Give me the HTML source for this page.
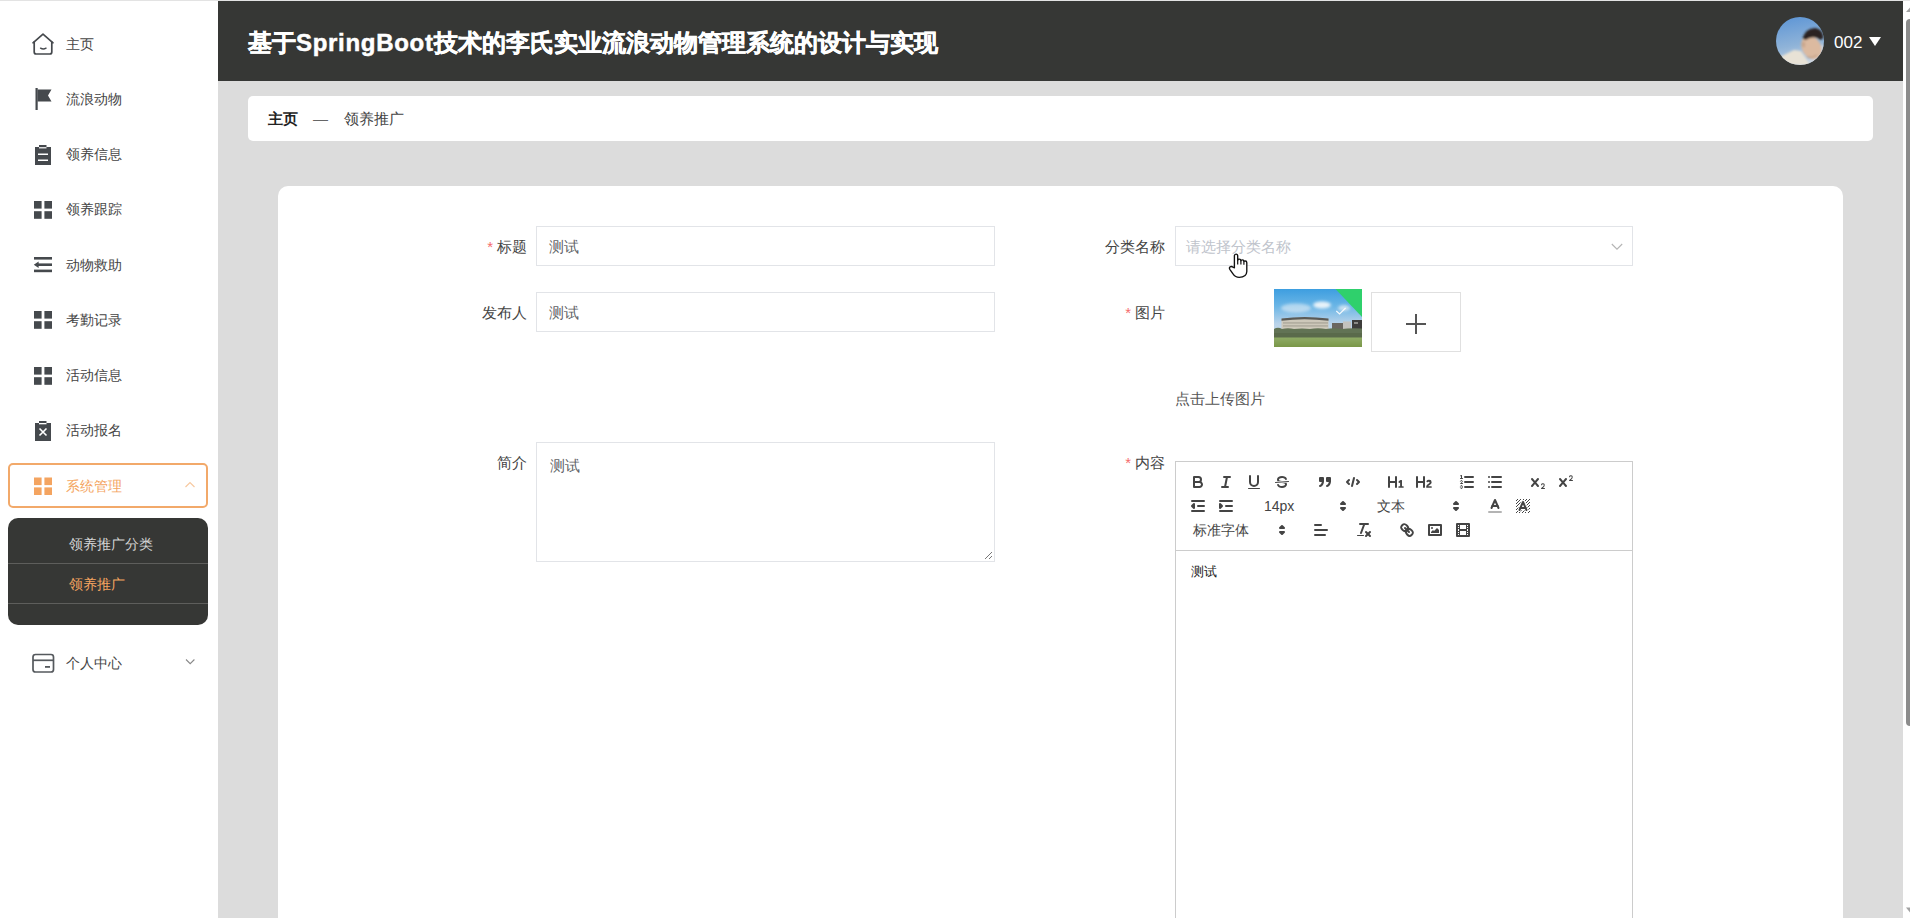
<!DOCTYPE html>
<html><head><meta charset="utf-8">
<style>
*{box-sizing:border-box;margin:0;padding:0}
html,body{width:1910px;height:918px;overflow:hidden;font-family:"Liberation Sans",sans-serif;background:#fff}
#topline{position:absolute;left:0;top:0;width:1910px;height:1px;background:#e3e3e3}
#side{position:absolute;left:0;top:1px;width:218px;height:917px;background:#fff}
#header{position:absolute;left:218px;top:1px;width:1685px;height:80px;background:#363735}
#main{position:absolute;left:218px;top:81px;width:1685px;height:837px;background:#dcdcdc}
#sb{position:absolute;left:1903px;top:1px;width:7px;height:917px;background:#fff}
#sbthumb{position:absolute;left:1906px;top:19px;width:4px;height:707px;background:#8c8c8c;border-radius:4px 0 0 4px}
.title{position:absolute;left:248px;top:27px;-webkit-text-stroke:0.5px #fff;font-size:24px;font-weight:bold;color:#fff;white-space:nowrap;letter-spacing:0px}
.avatar{position:absolute;left:1776px;top:16.5px;width:48px;height:48px;border-radius:50%;overflow:hidden}
.uname{position:absolute;left:1834px;top:33px;font-size:17px;line-height:20px;color:#fff}
.tri{position:absolute;left:1869px;top:37px;width:0;height:0;border-left:6px solid transparent;border-right:6px solid transparent;border-top:9px solid #fff}
.bc{position:absolute;left:248px;top:96px;width:1625px;height:45px;background:#fff;border-radius:5px}
.bc span{position:absolute;top:14px;font-size:15px;line-height:17px;color:#333}
.card{position:absolute;left:278px;top:186px;width:1565px;height:800px;background:#fff;border-radius:10px}
.mt{position:absolute;left:66px;font-size:14px;line-height:16px;color:#454545;white-space:nowrap}
.menu .it{position:absolute;left:0;width:218px;height:40px}
.menu .it .tx{position:absolute;left:66px;top:12px;font-size:14px;color:#4a4a4a}
.menu .it svg{position:absolute;left:32px;top:10px}
.lbl{position:absolute;font-size:15px;line-height:17px;color:#444;text-align:right;white-space:nowrap}
.lr{right:1383px}.rr{right:745px}
.req{color:#f56c6c;margin-right:4px}
.inp{position:absolute;border:1px solid #e2e4e8;background:#fff}
.inp .v{position:absolute;left:12px;font-size:15px;line-height:17px;color:#606266;white-space:nowrap}
.ed{position:absolute;border:1px solid #ccc;background:#fff}
.s{fill:none;stroke:#444;stroke-width:2;stroke-linecap:round;stroke-linejoin:round}
.t{stroke-width:1}
.f{fill:#444}
.f.s{fill:#444}
.pk{position:absolute;font-size:14px;line-height:22px;color:#444;white-space:nowrap}
</style></head><body>
<div id="topline"></div>
<div id="side">
<svg style="position:absolute;left:0;top:-1px" width="218" height="700" viewBox="0 0 218 700">
<g fill="none" stroke="#45494d" stroke-width="1.7" stroke-linejoin="round" stroke-linecap="round">
<path d="M33 42.8 L43 34.2 L53 42.8"/>
<path d="M34.2 42 V52 Q34.2 54 36.2 54 H49.8 Q51.8 54 51.8 52 V42"/>
<path d="M40.6 48.2 Q43.3 49.8 46 48.2" stroke-width="1.5"/>
</g>
<g fill="#45494d">
<rect x="35.5" y="88" width="2.2" height="22"/>
<path d="M37.5 89.5 H51.5 L48 95.5 L51.5 101.5 H37.5 Z"/>
<path d="M35 147 H39 V145 H46.5 V147 H51 V165 H35 Z M38 153.5 V155 H48 V153.5 Z M38 159.5 V161 H48 V159.5 Z" fill-rule="evenodd"/>
<rect x="34" y="201" width="7.6" height="7.6"/><rect x="44.4" y="201" width="7.6" height="7.6"/><rect x="34" y="211.2" width="7.6" height="7.6"/><rect x="44.4" y="211.2" width="7.6" height="7.6"/>
<rect x="34" y="257" width="18" height="2.6"/><rect x="38" y="263.4" width="14" height="2.6"/><rect x="34" y="269.6" width="18" height="2.6"/>
<path d="M33.8 264.7 L38.6 261.4 V268 Z"/>
<rect x="34" y="311" width="7.6" height="7.6"/><rect x="44.4" y="311" width="7.6" height="7.6"/><rect x="34" y="321.2" width="7.6" height="7.6"/><rect x="44.4" y="321.2" width="7.6" height="7.6"/>
<rect x="34" y="367" width="7.6" height="7.6"/><rect x="44.4" y="367" width="7.6" height="7.6"/><rect x="34" y="377.2" width="7.6" height="7.6"/><rect x="44.4" y="377.2" width="7.6" height="7.6"/>
<path d="M35 423 H39 V421 H46.5 V423 H51 V441 H35 Z" />
</g>
<path d="M39.5 428.5 L46.5 435.5 M46.5 428.5 L39.5 435.5" stroke="#fff" stroke-width="1.6"/>
<rect x="39" y="147.2" width="7.5" height="1.2" fill="#fff"/>
<rect x="39" y="423" width="7.5" height="1.3" fill="#fff"/>
<rect x="9" y="464" width="198" height="43" rx="4" fill="#fff" stroke="#f2a96a" stroke-width="2"/>
<g fill="#f4a460">
<rect x="34" y="477.5" width="7.6" height="7.6"/><rect x="44.4" y="477.5" width="7.6" height="7.6"/><rect x="34" y="487.4" width="7.6" height="7.6"/><rect x="44.4" y="487.4" width="7.6" height="7.6"/>
</g>
<path d="M185.5 487 L190 482.5 L194.5 487" fill="none" stroke="#f7c9a0" stroke-width="1.2"/>
<rect x="8" y="518" width="200" height="107" rx="10" fill="#363735"/>
<rect x="8" y="563" width="200" height="1" fill="#5e5e5c"/>
<rect x="8" y="603" width="200" height="1" fill="#5e5e5c"/>
<g fill="none" stroke="#55595d" stroke-width="1.7">
<rect x="33" y="654.5" width="20.5" height="17.5" rx="2.5"/>
<path d="M33 660.3 H53.5"/>
</g>
<rect x="45" y="666" width="5" height="1.8" fill="#55595d"/>
<path d="M186 659.5 L190.2 663.7 L194.4 659.5" fill="none" stroke="#888" stroke-width="1.1"/>
</svg>
<div class="mt" style="top:35px">主页</div>
<div class="mt" style="top:90px">流浪动物</div>
<div class="mt" style="top:145px">领养信息</div>
<div class="mt" style="top:200px">领养跟踪</div>
<div class="mt" style="top:256px">动物救助</div>
<div class="mt" style="top:311px">考勤记录</div>
<div class="mt" style="top:366px">活动信息</div>
<div class="mt" style="top:421px">活动报名</div>
<div class="mt" style="top:477px;color:#f4a460">系统管理</div>
<div class="mt" style="top:535px;left:69px;color:#d4d4d4">领养推广分类</div>
<div class="mt" style="top:575px;left:69px;color:#f4a460">领养推广</div>
<div class="mt" style="top:654px">个人中心</div>
</div>
<div id="header">
</div>
<div id="main"></div>
<div class="title">基于<span style="letter-spacing:0.7px">SpringBoot</span>技术的李氏实业流浪动物管理系统的设计与实现</div>
<div class="avatar"><svg width="48" height="48" viewBox="0 0 48 48">
<defs><linearGradient id="av" x1="0.2" y1="0" x2="0.4" y2="1"><stop offset="0" stop-color="#5e96d6"/><stop offset="0.6" stop-color="#8fb3d8"/><stop offset="1" stop-color="#c4d2e2"/></linearGradient>
<filter id="ab"><feGaussianBlur stdDeviation="0.8"/></filter></defs>
<rect width="48" height="48" fill="url(#av)"/>
<g filter="url(#ab)">
<path d="M33 46 L46.5 27 L48 30 L48 48 L36 48 Z" fill="#cdd6e0"/>
<path d="M4 40 L18 33 L25 34 L31 43 L34 48 L4 48 Z" fill="#e8e2d6"/>
<ellipse cx="35.5" cy="30.5" rx="9.5" ry="12.5" transform="rotate(-30 35.5 30.5)" fill="#dcbaa0"/>
<path d="M26.5 21.5 Q29 11.5 39.5 11 Q47.5 12.5 47.5 21 L44.5 23 Q38 17.5 29.5 23 Z" fill="#2b2420"/>
<ellipse cx="27.5" cy="27.5" rx="1.8" ry="3" fill="#c9a68c"/>
<path d="M31 40 Q36 42 41 38" stroke="#b89478" stroke-width="1" fill="none"/>
</g></svg></div>
<div class="uname">002</div>
<div class="tri"></div>
<div class="bc"><span style="left:20px;font-weight:bold;color:#222">主页</span><span style="left:65px;color:#666">—</span><span style="left:96px;color:#444">领养推广</span></div>
<div class="card"></div>
<div class="lbl lr" style="top:238px"><span class="req">*</span>标题</div>
<div class="inp" style="left:536px;top:226px;width:459px;height:40px"><span class="v" style="top:11px">测试</span></div>
<div class="lbl lr" style="top:304px">发布人</div>
<div class="inp" style="left:536px;top:292px;width:459px;height:40px"><span class="v" style="top:11px">测试</span></div>
<div class="lbl lr" style="top:454px">简介</div>
<div class="inp" style="left:536px;top:442px;width:459px;height:120px"><span class="v" style="top:14px;left:13px">测试</span>
<svg style="position:absolute;right:1px;bottom:1px" width="10" height="10"><path d="M2 9 L9 2 M6 9 L9 6" stroke="#777" stroke-width="1"/></svg></div>
<div class="lbl rr" style="top:238px">分类名称</div>
<div class="inp" style="left:1175px;top:226px;width:458px;height:40px"><span class="v" style="top:11px;left:10px;color:#c0c4cc">请选择分类名称</span>
<svg style="position:absolute;left:434.5px;top:16px" width="12" height="8"><path d="M0.8 1 L6 6.2 L11.2 1" fill="none" stroke="#b4b4b4" stroke-width="1.1"/></svg></div>
<svg style="position:absolute;left:1222px;top:248px" width="34" height="34" viewBox="0 0 34 34">
<path d="M12.4 19.8 V8 Q12.4 6.1 14 6.1 Q15.7 6.1 15.7 8 V12.6 Q15.7 11.1 17.3 11.1 Q18.9 11.1 18.9 12.8 Q18.9 11.9 20.4 11.9 Q21.9 11.9 21.9 13.6 Q21.9 13 23.3 13 Q24.8 13 24.8 14.8 V23.5 Q24.6 29.3 17.2 29.3 Q13.4 29.3 11 25.8 L7.8 21.3 Q6.9 19.6 8.2 18.8 Q9.6 18 11 19.2 Z" fill="#fff" stroke="#111" stroke-width="1.35" stroke-linejoin="round"/>
<path d="M15.7 12.4 V16.6 M18.9 12.6 V16.6 M21.9 13.4 V16.8" stroke="#111" stroke-width="1.2" fill="none"/>
</svg>
<div class="lbl rr" style="top:304px"><span class="req">*</span>图片</div>
<div class="thumb" style="position:absolute;left:1274px;top:289px;width:88px;height:58px;overflow:hidden">
<svg width="88" height="58" viewBox="0 0 88 58">
<defs><linearGradient id="sky" x1="0" y1="0" x2="0" y2="1"><stop offset="0" stop-color="#3d9ee0"/><stop offset="0.3" stop-color="#6cb6e6"/><stop offset="0.6" stop-color="#b9d3ea"/><stop offset="1" stop-color="#d5dfe8"/></linearGradient>
<linearGradient id="gr" x1="0" y1="0" x2="0" y2="1"><stop offset="0" stop-color="#8fab66"/><stop offset="1" stop-color="#7a9748"/></linearGradient>
<filter id="bl" x="-50%" y="-50%" width="200%" height="200%"><feGaussianBlur stdDeviation="1.5"/></filter>
<filter id="bl2"><feGaussianBlur stdDeviation="0.5"/></filter></defs>
<rect width="88" height="58" fill="url(#sky)"/>
<ellipse cx="22" cy="19" rx="15" ry="4.5" fill="#eef3f8" opacity="0.55" filter="url(#bl)"/>
<ellipse cx="48" cy="16" rx="9" ry="3.5" fill="#f6f9fc" opacity="0.9" filter="url(#bl)"/>
<ellipse cx="70" cy="19" rx="6" ry="3" fill="#eef2f6" opacity="0.7" filter="url(#bl)"/>
<g filter="url(#bl2)">
<path d="M7.5 30 Q30 27 54.5 30 L54.5 41 L7.5 41 Z" fill="#cdc8ba"/>
<path d="M7.5 29.5 Q30 26.5 54.5 29.5 L54.5 31.8 Q30 28.8 7.5 31.8 Z" fill="#5a5a56"/>
<rect x="9" y="33.5" width="45" height="0.9" fill="#9a968a"/><rect x="9" y="36.5" width="45" height="0.9" fill="#9a968a"/>
<rect x="58" y="34" width="11" height="7" fill="#6a6660"/>
<rect x="69" y="32.5" width="8" height="8.5" fill="#c4c2be"/>
<rect x="78" y="31" width="10" height="10" fill="#3c3c3a"/>
<rect x="80" y="33" width="4" height="2" fill="#8a8a86"/>
<path d="M0 40 Q4 37.5 8 40 Q14 38.5 20 40 Q28 38.8 36 40 Q44 38.5 52 40 Q60 38.5 68 40 Q76 38.8 88 39.5 V49 H0 Z" fill="#627355"/>
<rect x="0" y="44" width="88" height="5" fill="#5a6b4c"/>
<rect x="0" y="48.5" width="88" height="9.5" fill="url(#gr)"/>
</g>
<path d="M61.5 0 H88 V28 Z" fill="#2fd06c"/>
<path d="M62.3 22 L65.6 25 L71.6 19" fill="none" stroke="#fff" stroke-width="1.2" opacity="0.9"/>
</svg></div>
<div class="inp" style="left:1371px;top:292px;width:90px;height:60px;border-color:#e0e0e0">
<div style="position:absolute;left:34px;top:29.5px;width:20px;height:2px;background:#555"></div>
<div style="position:absolute;left:43px;top:20.5px;width:2px;height:20px;background:#555"></div>
</div>
<div class="lbl" style="left:1175px;top:390px;color:#555">点击上传图片</div>
<div class="lbl rr" style="top:454px"><span class="req">*</span>内容</div>
<div class="ed" style="left:1175px;top:461px;width:458px;height:500px"></div><div style="position:absolute;left:1176px;top:550px;width:456px;height:1px;background:#ccc"></div><div style="position:absolute;left:1191px;top:563px;font-size:13px;line-height:18px;color:#222">测试</div><svg style="position:absolute;left:1189px;top:473px" width="18" height="18" viewBox="0 0 18 18"><path class="s" d="M5,4H9.5A2.5,2.5,0,0,1,12,6.5v0A2.5,2.5,0,0,1,9.5,9H5A0,0,0,0,1,5,9V4A0,0,0,0,1,5,4Z"/><path class="s" d="M5,9h5.5A2.5,2.5,0,0,1,13,11.5v0A2.5,2.5,0,0,1,10.5,14H5a0,0,0,0,1,0,0V9A0,0,0,0,1,5,9Z"/></svg>
<svg style="position:absolute;left:1217px;top:473px" width="18" height="18" viewBox="0 0 18 18"><line class="s" x1="7" x2="13" y1="4" y2="4"/><line class="s" x1="5" x2="11" y1="14" y2="14"/><line class="s" x1="8" x2="10" y1="14" y2="4"/></svg>
<svg style="position:absolute;left:1245px;top:473px" width="18" height="18" viewBox="0 0 18 18"><path class="s" d="M5,3V9a4.012,4.012,0,0,0,4,4H9a4.012,4.012,0,0,0,4-4V3"/><rect class="f" height="1" rx="0.5" ry="0.5" width="12" x="3" y="15"/></svg>
<svg style="position:absolute;left:1273px;top:473px" width="18" height="18" viewBox="0 0 18 18"><line class="s t" x1="15.5" x2="2.5" y1="8.5" y2="9.5"/><path class="f" d="M9.007,8C6.542,7.791,6,7.519,6,6.5,6,5.792,7.283,5,9,5c1.571,0,2.765.679,2.969,1.309a1,1,0,0,0,1.9-.617C13.356,4.106,11.354,3,9,3,6.2,3,4,4.538,4,6.5a3.2,3.2,0,0,0,.5,1.843Z"/><path class="f" d="M8.984,10C11.457,10.208,12,10.479,12,11.5c0,.708-1.283,1.5-3,1.5-1.571,0-2.765-.679-2.969-1.309a1,1,0,1,0-1.9.617C4.644,13.894,6.646,15,9,15c2.8,0,5-1.538,5-3.5a3.2,3.2,0,0,0-.5-1.843Z"/></svg>
<svg style="position:absolute;left:1316px;top:473px" width="18" height="18" viewBox="0 0 18 18"><rect class="f s" height="3" width="3" x="4" y="5"/><rect class="f s" height="3" width="3" x="11" y="5"/><path class="f s" fill-rule="evenodd" d="M7,8c0,4.031-3,5-3,5"/><path class="f s" fill-rule="evenodd" d="M14,8c0,4.031-3,5-3,5"/></svg>
<svg style="position:absolute;left:1344px;top:473px" width="18" height="18" viewBox="0 0 18 18"><polyline class="s" points="5 7 3 9 5 11"/><polyline class="s" points="13 7 15 9 13 11"/><line class="s" x1="10" x2="8" y1="5" y2="13"/></svg>
<svg style="position:absolute;left:1387px;top:473px" width="18" height="18" viewBox="0 0 18 18"><path class="f" d="M10,4V14a1,1,0,0,1-2,0V10H3v4a1,1,0,0,1-2,0V4A1,1,0,0,1,3,4V8H8V4a1,1,0,0,1,2,0Zm6.06787,9.209H14.98975V7.59863a.54085.54085,0,0,0-.605-.60547h-.62744a1.01119,1.01119,0,0,0-.748.29688L11.645,8.56641a.5435.5435,0,0,0-.022.8584l.28613.30762a.53861.53861,0,0,0,.84717.0332l.09912-.08789a1.2137,1.2137,0,0,0,.2417-.35254h.02246s-.01123.30859-.01123.60547V13.209H12.041a.54085.54085,0,0,0-.605.60547v.43945a.54085.54085,0,0,0,.605.60547h4.02686a.54085.54085,0,0,0,.605-.60547v-.43945A.54085.54085,0,0,0,16.06787,13.209Z"/></svg>
<svg style="position:absolute;left:1415px;top:473px" width="18" height="18" viewBox="0 0 18 18"><path class="f" d="M16.73975,13.81445v.43945a.54085.54085,0,0,1-.605.60547H11.855a.58392.58392,0,0,1-.64893-.60547V14.0127c0-2.90527,3.39941-3.42187,3.39941-4.55469a.77675.77675,0,0,0-.84717-.78125,1.17684,1.17684,0,0,0-.83594.38477c-.2749.26367-.561.374-.85791.13184l-.4292-.34082c-.30811-.24219-.38525-.51758-.1543-.81445a2.97155,2.97155,0,0,1,2.45361-1.17676,2.45393,2.45393,0,0,1,2.68408,2.40918c0,2.45312-3.1792,2.92676-3.27832,3.93848h2.79443A.54085.54085,0,0,1,16.73975,13.81445ZM9,3A.99974.99974,0,0,0,8,4V8H3V4A1,1,0,0,0,1,4V14a1,1,0,0,0,2,0V10H8v4a1,1,0,0,0,2,0V4A.99974.99974,0,0,0,9,3Z"/></svg>
<svg style="position:absolute;left:1458px;top:473px" width="18" height="18" viewBox="0 0 18 18"><line class="s" x1="7" x2="15" y1="4" y2="4"/><line class="s" x1="7" x2="15" y1="9" y2="9"/><line class="s" x1="7" x2="15" y1="14" y2="14"/><line class="s t" x1="2.5" x2="4.5" y1="5.5" y2="5.5"/><path class="f" d="M3.5,6A0.5,0.5,0,0,1,3,5.5V3.085l-0.276.138A0.5,0.5,0,0,1,2.053,3c-0.124-.247-0.023-0.324.224-0.447l1-.5A0.5,0.5,0,0,1,4,2.5v3A0.5,0.5,0,0,1,3.5,6Z"/><path class="s t" d="M4.5,10.5h-2c0-.234,1.85-1.076,1.85-2.234A0.959,0.959,0,0,0,2.5,8.156"/><path class="s t" d="M2.5,14.846a0.959,0.959,0,0,0,1.85-.109A0.7,0.7,0,0,0,3.75,14a0.688,0.688,0,0,0,.6-0.736,0.959,0.959,0,0,0-1.85-.109"/></svg>
<svg style="position:absolute;left:1486px;top:473px" width="18" height="18" viewBox="0 0 18 18"><line class="s" x1="6" x2="15" y1="4" y2="4"/><line class="s" x1="6" x2="15" y1="9" y2="9"/><line class="s" x1="6" x2="15" y1="14" y2="14"/><line class="s" x1="3" x2="3" y1="4" y2="4"/><line class="s" x1="3" x2="3" y1="9" y2="9"/><line class="s" x1="3" x2="3" y1="14" y2="14"/></svg>
<svg style="position:absolute;left:1529px;top:473px" width="18" height="18" viewBox="0 0 18 18"><path class="f" d="M15.5,15H13.861a3.858,3.858,0,0,0,1.914-2.975,1.8,1.8,0,0,0-1.6-1.751A1.921,1.921,0,0,0,12.021,11.7a0.50013,0.50013,0,1,0,.957.291h0a0.914,0.914,0,0,1,1.053-.725,0.81,0.81,0,0,1,.744.762c0,1.076-1.16971,1.86982-1.93971,2.43082A1.45639,1.45639,0,0,0,12,15.5a0.5,0.5,0,0,0,.5.5h3A0.5,0.5,0,0,0,15.5,15Z"/><path class="f" d="M9.65,5.241a1,1,0,0,0-1.409.108L6,7.964,3.759,5.349A1,1,0,0,0,2.192,6.59178Q2.21541,6.6213,2.241,6.649L4.684,9.5,2.241,12.35A1,1,0,0,0,3.71,13.70722q0.02557-.02768.049-0.05722L6,11.036,8.241,13.65a1,1,0,1,0,1.567-1.24277Q9.78459,12.3777,9.759,12.35L7.316,9.5,9.759,6.651A1,1,0,0,0,9.65,5.241Z"/></svg>
<svg style="position:absolute;left:1557px;top:473px" width="18" height="18" viewBox="0 0 18 18"><path class="f" d="M15.5,7H13.861a4.015,4.015,0,0,0,1.914-2.975,1.8,1.8,0,0,0-1.6-1.751A1.922,1.922,0,0,0,12.021,3.7a0.5,0.5,0,1,0,.957.291,0.917,0.917,0,0,1,1.053-.725,0.81,0.81,0,0,1,.744.762c0,1.077-1.164,1.925-1.934,2.486A1.423,1.423,0,0,0,12,7.5a0.5,0.5,0,0,0,.5.5h3A0.5,0.5,0,0,0,15.5,7Z"/><path class="f" d="M9.651,5.241a1,1,0,0,0-1.41.108L6,7.964,3.759,5.349a1,1,0,1,0-1.519,1.3L4.683,9.5,2.241,12.35a1,1,0,1,0,1.519,1.3L6,11.036,8.241,13.65a1,1,0,0,0,1.519-1.3L7.317,9.5,9.759,6.651A1,1,0,0,0,9.651,5.241Z"/></svg>
<svg style="position:absolute;left:1189px;top:497px" width="18" height="18" viewBox="0 0 18 18"><line class="s" x1="3" x2="15" y1="14" y2="14"/><line class="s" x1="3" x2="15" y1="4" y2="4"/><line class="s" x1="9" x2="15" y1="9" y2="9"/><polyline class="f s" points="5 7 5 11 3 9 5 7"/></svg>
<svg style="position:absolute;left:1217px;top:497px" width="18" height="18" viewBox="0 0 18 18"><line class="s" x1="3" x2="15" y1="14" y2="14"/><line class="s" x1="3" x2="15" y1="4" y2="4"/><line class="s" x1="9" x2="15" y1="9" y2="9"/><polyline class="f s" points="3 7 3 11 5 9 3 7"/></svg>
<svg style="position:absolute;left:1486px;top:497px" width="18" height="18" viewBox="0 0 18 18"><line class="s" style="opacity:0.4" x1="3" x2="15" y1="15" y2="15"/><polyline class="s" points="5.5 11 9 3 12.5 11"/><line class="s" x1="11.63" x2="6.38" y1="9" y2="9"/></svg>
<svg style="position:absolute;left:1514px;top:497px" width="18" height="18" viewBox="0 0 18 18"><g class="f"><polygon points="6 6.868 6 6 5 6 5 7 5.942 7 6 6.868"/><rect height="1" width="1" x="4" y="4"/><polygon points="6.817 5 6 5 6 6 6.38 6 6.817 5"/><rect height="1" width="1" x="2" y="6"/><rect height="1" width="1" x="3" y="5"/><rect height="1" width="1" x="4" y="7"/><polygon points="4 11.439 4 11 3 11 3 12 3.755 12 4 11.439"/><rect height="1" width="1" x="2" y="12"/><rect height="1" width="1" x="2" y="9"/><rect height="1" width="1" x="2" y="15"/><polygon points="4.63 10 4 10 4 11 4.192 11 4.63 10"/><rect height="1" width="1" x="3" y="8"/><path d="M10.832,4.2L11,4.582V4H10.708A1.948,1.948,0,0,1,10.832,4.2Z"/><path d="M7,4.582L7.168,4.2A1.929,1.929,0,0,1,7.292,4H7V4.582Z"/><path d="M8,13H7.683l-0.351.8a1.933,1.933,0,0,1-.124.2H8V13Z"/><rect height="1" width="1" x="12" y="2"/><rect height="1" width="1" x="11" y="3"/><path d="M9,3H8V3.282A1.985,1.985,0,0,1,9,3Z"/><rect height="1" width="1" x="2" y="3"/><rect height="1" width="1" x="6" y="2"/><rect height="1" width="1" x="3" y="2"/><rect height="1" width="1" x="5" y="3"/><rect height="1" width="1" x="9" y="2"/><rect height="1" width="1" x="15" y="14"/><polygon points="13.447 10.174 13.469 10.225 13.472 10.232 13.808 11 14 11 14 10 13.37 10 13.447 10.174"/><rect height="1" width="1" x="13" y="7"/><rect height="1" width="1" x="15" y="5"/><rect height="1" width="1" x="14" y="6"/><rect height="1" width="1" x="15" y="8"/><rect height="1" width="1" x="14" y="9"/><path d="M3.775,14H3v1H4V14.314A1.97,1.97,0,0,1,3.775,14Z"/><rect height="1" width="1" x="14" y="3"/><polygon points="12 6.868 12 6 11.62 6 12 6.868"/><rect height="1" width="1" x="15" y="2"/><rect height="1" width="1" x="12" y="5"/><rect height="1" width="1" x="13" y="4"/><polygon points="12.933 9 13 9 13 8 12.495 8 12.933 9"/><rect height="1" width="1" x="9" y="14"/><rect height="1" width="1" x="8" y="15"/><path d="M6,14.926V15H7V14.316A1.993,1.993,0,0,1,6,14.926Z"/><rect height="1" width="1" x="5" y="15"/><path d="M10.668,13.8L10.317,13H10v1h0.792A1.947,1.947,0,0,1,10.668,13.8Z"/><rect height="1" width="1" x="11" y="15"/><path d="M14.332,12.2a1.99,1.99,0,0,1,.166.8H15V12H14.245Z"/><rect height="1" width="1" x="14" y="15"/><rect height="1" width="1" x="15" y="11"/></g><polyline class="s" points="5.5 13 9 5 12.5 13"/><line class="s" x1="11.63" x2="6.38" y1="11" y2="11"/></svg>
<svg style="position:absolute;left:1312px;top:521px" width="18" height="18" viewBox="0 0 18 18"><line class="s" x1="3" x2="15" y1="9" y2="9"/><line class="s" x1="3" x2="13" y1="14" y2="14"/><line class="s" x1="3" x2="9" y1="4" y2="4"/></svg>
<svg style="position:absolute;left:1355px;top:521px" width="18" height="18" viewBox="0 0 18 18"><line class="s" x1="5" x2="13" y1="3" y2="3"/><line class="s" x1="6" x2="9.35" y1="12" y2="3"/><line class="s" x1="11" x2="15" y1="11" y2="15"/><line class="s" x1="15" x2="11" y1="11" y2="15"/><rect class="f" height="1" rx="0.5" ry="0.5" width="7" x="2" y="14"/></svg>
<svg style="position:absolute;left:1398px;top:521px" width="18" height="18" viewBox="0 0 18 18"><line class="s" x1="7" x2="11" y1="7" y2="11"/><path class="s" d="M8.9,4.577a3.476,3.476,0,0,1,.36,4.679A3.476,3.476,0,0,1,4.577,8.9C3.185,7.5,2.035,6.4,4.217,4.217S7.5,3.185,8.9,4.577Z"/><path class="s" d="M13.423,9.1a3.476,3.476,0,0,0-4.679-.36,3.476,3.476,0,0,0,.36,4.679c1.392,1.392,2.5,2.542,4.679.36S14.815,10.5,13.423,9.1Z"/></svg>
<svg style="position:absolute;left:1426px;top:521px" width="18" height="18" viewBox="0 0 18 18"><rect class="s" height="10" width="12" x="3" y="4"/><circle class="f" cx="6" cy="7" r="1"/><polyline class="f" points="5 12 5 11 7 9 8 10 11 7 13 9 13 12 5 12"/></svg>
<svg style="position:absolute;left:1454px;top:521px" width="18" height="18" viewBox="0 0 18 18"><rect class="s" height="12" width="12" x="3" y="3"/><rect class="f" height="12" width="1" x="5" y="3"/><rect class="f" height="12" width="1" x="12" y="3"/><rect class="f" height="2" width="8" x="5" y="8"/><rect class="f" height="1" width="3" x="3" y="5"/><rect class="f" height="1" width="3" x="3" y="7"/><rect class="f" height="1" width="3" x="3" y="10"/><rect class="f" height="1" width="3" x="3" y="12"/><rect class="f" height="1" width="3" x="12" y="5"/><rect class="f" height="1" width="3" x="12" y="7"/><rect class="f" height="1" width="3" x="12" y="10"/><rect class="f" height="1" width="3" x="12" y="12"/></svg>
<div class="pk" style="left:1264px;top:495px">14px</div><svg style="position:absolute;left:1334px;top:497px" width="18" height="18" viewBox="0 0 18 18"><polygon class="s" points="7 11 9 13 11 11 7 11"/><polygon class="s" points="7 7 9 5 11 7 7 7"/></svg>
<div class="pk" style="left:1377px;top:495px">文本</div><svg style="position:absolute;left:1447px;top:497px" width="18" height="18" viewBox="0 0 18 18"><polygon class="s" points="7 11 9 13 11 11 7 11"/><polygon class="s" points="7 7 9 5 11 7 7 7"/></svg>
<div class="pk" style="left:1193px;top:519px">标准字体</div><svg style="position:absolute;left:1273px;top:521px" width="18" height="18" viewBox="0 0 18 18"><polygon class="s" points="7 11 9 13 11 11 7 11"/><polygon class="s" points="7 7 9 5 11 7 7 7"/></svg>
<div id="sb"></div><div id="sbthumb"></div>
<svg style="position:absolute;left:1903px;top:0" width="7" height="918"><polygon points="3,12 7,7.5 7,12" fill="#a3a3a3"/><polygon points="3,907.5 7,907.5 7,912.5" fill="#a3a3a3"/></svg>
</body></html>
